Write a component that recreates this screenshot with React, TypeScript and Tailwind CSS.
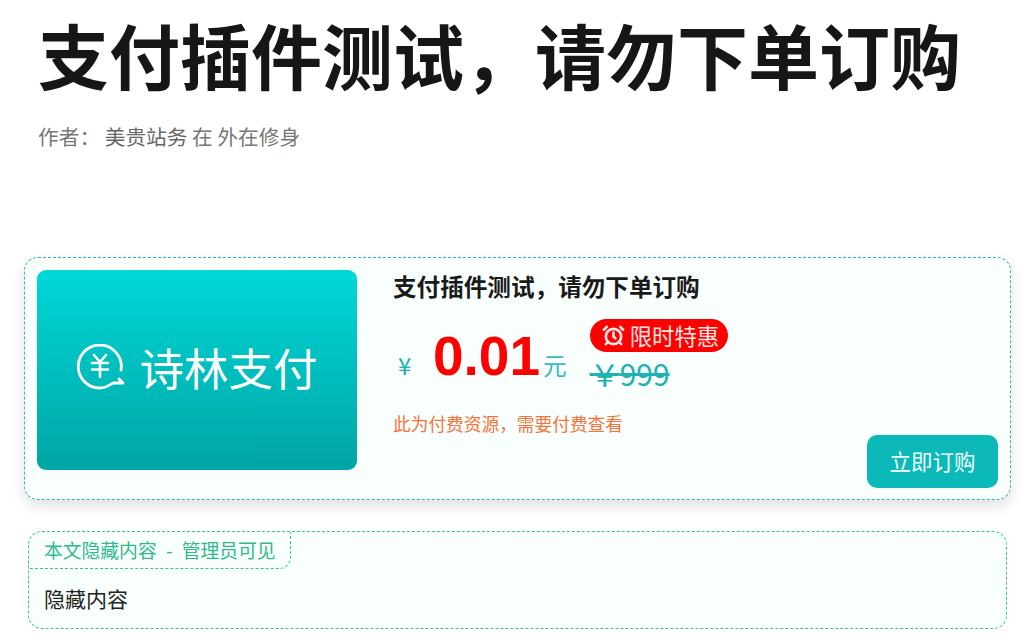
import React from 'react';
import { AlarmClock } from 'lucide-react';

const FONT = "font-['Noto_Sans_CJK_SC','Noto_Sans',sans-serif]";

const PayLogo = () => (
    <div className="mb-[6px] flex items-center gap-[13px] text-white">
        <svg width="50" height="46" viewBox="0 0 50 46" fill="none" stroke="currentColor" strokeWidth="2.8" strokeLinecap="round" strokeLinejoin="round">
            <path d="M45 26 A21.5 21.5 0 1 0 24 44 C30 44 33 41 37 39 L47 39 L43 35" />
            <path d="M18 11 L24 18 L30 11" strokeWidth="2.6" />
            <path d="M16 19 H32 M16 25.5 H32 M24 18 V33" strokeWidth="2.6" />
        </svg>
        <span className={`${FONT} text-[44.5px] leading-none font-normal`}>诗林支付</span>
    </div>
);

const PayCard = () => (
    <div className="flex gap-[35px] rounded-[14px] border border-dashed border-[#2fb5b5] bg-[#f8fffd] p-[12px] shadow-[0_6px_14px_rgba(0,0,0,0.12)]">
        <div className="flex h-[200px] w-[320px] shrink-0 items-center justify-center rounded-[9px] bg-gradient-to-b from-[#00d8d8] to-[#00a5a5]">
            <PayLogo />
        </div>
        <div className="flex h-[217px] flex-1 flex-col pl-[1px]">
            <h3 className="-mt-[1px] text-[23.6px] leading-[34px] font-bold text-[#1a1a1a]">支付插件测试，请勿下单订购</h3>
            <div className="mt-[15px] flex h-[70px] items-start">
                <span className="mt-[30px] ml-[5px] w-[35px] text-[24px] leading-[34px] text-[#20b2b2]">¥</span>
                <span className="mt-[6px] font-['Liberation_Sans',sans-serif] text-[55px] leading-[64px] font-bold text-[#ff0000]">0.01</span>
                <span className="mt-[30px] ml-[3px] text-[23.6px] leading-[34px] text-[#3bbcbc]">元</span>
                <div className="ml-[23px] flex flex-col items-start">
                    <span className="mt-[1px] flex h-[33px] w-[138px] items-center gap-[5px] rounded-full bg-[#ff0000] pl-[12px] text-[22.4px] leading-none text-[#ffe4e4]">
                        <AlarmClock size={23} strokeWidth={2.8} className="text-[#ffe4e4]" />
                        限时特惠
                    </span>
                    <span className="mt-[3px] text-[30px] leading-[36px] text-[#20b2b2] line-through">{'\uFFE5'}999</span>
                </div>
            </div>
            <p className="mt-[24px] text-[17.7px] leading-[22px] text-[#f4743b]">此为付费资源，需要付费查看</p>
            <button className="mt-auto -mb-[1px] flex h-[53px] w-[131px] shrink-0 items-center justify-center self-end rounded-[10px] bg-[#0cb9b9] text-[21.5px] font-normal text-[#f0ffff]">
                立即订购
            </button>
        </div>
    </div>
);

const HiddenBox = () => (
    <div className="mx-[4px] mt-[31px] h-[98px] rounded-[14px] border border-dashed border-[#3cbf97] bg-[#f9fffd]">
        <div className="flex h-[37px] w-[262px] items-center rounded-br-[12px] border-r border-b border-dashed border-[#3cbf97] pl-[15px] text-[18.8px] leading-none whitespace-pre text-[#2fb98d]">
            本文隐藏内容 <span className="px-[5px]">-</span> 管理员可见
        </div>
        <p className="mt-[14px] pl-[15px] text-[21px] leading-[30px] text-[#222222]">隐藏内容</p>
    </div>
);

export default function App() {
    return (
        <div className={`${FONT} h-[643px] w-[1024px] overflow-hidden bg-white`}>
            <div className="pt-[1px] pl-[38px]">
                <h1 className="text-[71px] leading-[104px] font-bold whitespace-nowrap text-[#161616]">支付插件测试，请勿下单订购</h1>
                <div className="mt-[16px] text-[20.7px] leading-[30px] text-[#777777]">
                    作者： <span className="text-[#666666]">美贵站务</span> 在 外在修身
                </div>
            </div>
            <div className="mt-[106px] mr-[13px] ml-[24px]">
                <PayCard />
                <HiddenBox />
            </div>
        </div>
    );
}
